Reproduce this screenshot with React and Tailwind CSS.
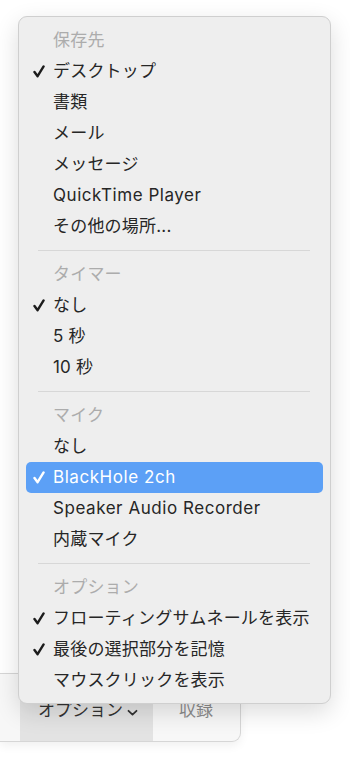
const SECTIONS = [
  {
    title: '保存先',
    items: [
      { label: 'デスクトップ', checked: true },
      { label: '書類' },
      { label: 'メール' },
      { label: 'メッセージ' },
      { label: 'QuickTime Player', latin: true },
      { label: 'その他の場所...' },
    ],
  },
  {
    title: 'タイマー',
    items: [{ label: 'なし', checked: true }, { label: '5 秒' }, { label: '10 秒' }],
  },
  {
    title: 'マイク',
    items: [
      { label: 'なし' },
      { label: 'BlackHole 2ch', checked: true, active: true, latin: true },
      { label: 'Speaker Audio Recorder', latin: true },
      { label: '内蔵マイク' },
    ],
  },
  {
    title: 'オプション',
    items: [
      { label: 'フローティングサムネールを表示', checked: true },
      { label: '最後の選択部分を記憶', checked: true },
      { label: 'マウスクリックを表示' },
    ],
  },
];

const Check = ({ white }) => (
  <svg width="12" height="13" viewBox="0 0 12 13" fill="none">
    <path
      d="M1.5 7 L4.6 11.2 L10.6 1.4"
      stroke={white ? '#ffffff' : '#1c1c1c'}
      strokeWidth="2.4"
      strokeLinecap="round"
      strokeLinejoin="round"
    />
  </svg>
);

const MenuRow = ({ item }) => (
  <div
    className={`mx-[7px] flex h-[31px] items-center rounded-[5px] pl-[7px] ${
      item.active ? 'bg-[#5ca0f6] text-white' : 'text-[#262626]'
    }`}
  >
    <span className="flex w-[20px] items-center">{item.checked && <Check white={item.active} />}</span>
    <span className={`whitespace-nowrap tracking-[0.2px] ${item.latin ? 'tracking-[0.55px]' : ''}`}>{item.label}</span>
  </div>
);

export default function App() {
  return (
    <div
      className="relative h-[762px] w-[350px] overflow-hidden bg-white text-[17px]"
      style={{ fontFamily: 'Inter, "Noto Sans CJK JP", sans-serif' }}
    >
      {/* toolbar behind the menu */}
      <div className="pt-[673px]">
        <div className="flex h-[69px] w-[241px] rounded-br-[9px] border-t border-r border-b border-[#d6d6d6] bg-[#f7f7f7] shadow-[0_4px_10px_rgba(0,0,0,0.06)]">
          <div className="ml-[20px] flex w-[133px] items-center gap-[4px] bg-[#e3e3e3] pt-[6px] pl-[18px] text-[#333333]">
            <span>オプション</span>
            <svg width="11" height="8" viewBox="0 0 11 8" fill="none" className="mt-[4px]">
              <path d="M1.5 1.8 L5.5 5.6 L9.5 1.8" stroke="#333" strokeWidth="1.8" strokeLinecap="round" strokeLinejoin="round" />
            </svg>
          </div>
          <div className="flex flex-1 items-center pt-[6px] pl-[26px] text-[#8c8c8c]">収録</div>
        </div>
      </div>

      {/* dropdown menu */}
      <div className="absolute left-[18px] top-[16px] w-[313px] rounded-[9px] border border-[#cfcfcf] bg-[#eeeeee] pt-[8px] pb-[7px] shadow-[0_8px_24px_rgba(0,0,0,0.14)]">
        {SECTIONS.map((sec, i) => (
          <div key={sec.title}>
            {i > 0 && (
              <div className="flex h-[17px] items-center pl-[19px] pr-[20px]">
                <div className="h-px w-full bg-[#d7d7d7]" />
              </div>
            )}
            <div className="flex h-[31px] items-center pl-[34px] tracking-[0.2px] text-[#acacac]">{sec.title}</div>
            {sec.items.map((item) => (
              <MenuRow key={item.label} item={item} />
            ))}
          </div>
        ))}
      </div>
    </div>
  );
}
